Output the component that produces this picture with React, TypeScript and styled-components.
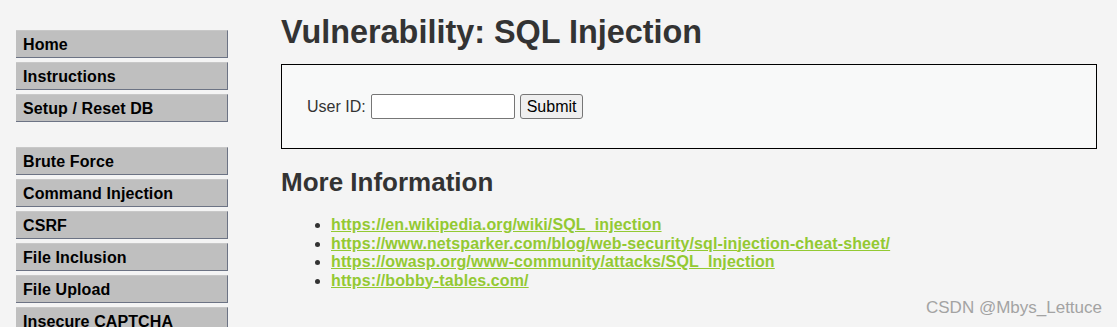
import React from "react";
import styled, { createGlobalStyle } from "styled-components";

const GlobalStyle = createGlobalStyle`
  html, body {
    margin: 0;
    padding: 0;
    background: #f4f4f4;
    font-family: "Liberation Sans", Arial, sans-serif;
  }
  * { box-sizing: border-box; }
`;

const Page = styled.div`
  position: relative;
  width: 1117px;
  height: 327px;
  overflow: hidden;
  display: flex;
  align-items: flex-start;
  background: #f4f4f4;
`;

const Sidebar = styled.nav`
  width: 228px;
  padding: 30px 0 0 16px;
  display: flex;
  flex-direction: column;
  gap: 25px;
  flex-shrink: 0;
`;

const MenuGroup = styled.ul`
  list-style: none;
  margin: 0;
  padding: 0;
  display: flex;
  flex-direction: column;
  gap: 4px;
`;

const MenuItem = styled.li`
  height: 28px;
  width: 212px;
  padding: 5px 7px 0;
  background: #bfbfbf;
  border-top: 1px solid #c8c8c8;
  border-right: 1px solid #6c7384;
  border-bottom: 1px solid #6c7384;
  font-size: 16px;
  font-weight: bold;
  letter-spacing: 0.1px;
  color: #000;
  line-height: 18px;
  white-space: nowrap;
`;

const Main = styled.main`
  width: 816px;
  margin-left: 53px;
  display: flex;
  flex-direction: column;
`;

const Title = styled.h1`
  margin: 14px 0 0;
  font-size: 32.4px;
  line-height: 36px;
  font-weight: bold;
  color: #333;
`;

const FormBox = styled.div`
  margin-top: 14px;
  height: 85px;
  border: 1px solid #000;
  background: #f8f9f9;
  padding: 0 25px;
  display: flex;
  align-items: center;
  gap: 5px;
  font-size: 16px;
  color: #333;
`;

const Label = styled.span`
  font-size: 16px;
  color: #333;
`;

const TextInput = styled.input`
  width: 144px;
  height: 25px;
  border: 1px solid #767676;
  border-radius: 2px;
  background: #fff;
  padding: 1px 2px;
  font-size: 13px;
`;

const SubmitButton = styled.button`
  height: 25px;
  padding: 0 6px;
  border: 1px solid #767676;
  border-radius: 3px;
  background: #efefef;
  font-family: "Liberation Sans", Arial, sans-serif;
  font-size: 16px;
  color: #000;
`;

const SubTitle = styled.h2`
  margin: 18px 0 0;
  font-size: 26px;
  line-height: 30px;
  font-weight: bold;
  color: #333;
`;

const LinkList = styled.ul`
  margin: 19px 0 0;
  padding-left: 50px;
  font-size: 16px;
  line-height: 18.5px;
  color: #333;
`;

const LinkItem = styled.li``;

const Link = styled.a`
  color: #93c932;
  font-weight: bold;
  letter-spacing: 0.12px;
  text-decoration: underline;
`;

const Watermark = styled.div`
  position: absolute;
  right: 15px;
  bottom: 9px;
  font-family: "Liberation Sans", Arial, sans-serif;
  font-size: 17px;
  color: #a3a3a3;
  white-space: nowrap;
`;

const groups = [
  ["Home", "Instructions", "Setup / Reset DB"],
  ["Brute Force", "Command Injection", "CSRF", "File Inclusion", "File Upload", "Insecure CAPTCHA"],
];

const links = [
  "https://en.wikipedia.org/wiki/SQL_injection",
  "https://www.netsparker.com/blog/web-security/sql-injection-cheat-sheet/",
  "https://owasp.org/www-community/attacks/SQL_Injection",
  "https://bobby-tables.com/",
];

export default function App() {
  return (
    <>
      <GlobalStyle />
      <Page>
        <Sidebar>
          {groups.map((g, i) => (
            <MenuGroup key={i}>
              {g.map((item) => (
                <MenuItem key={item}>{item}</MenuItem>
              ))}
            </MenuGroup>
          ))}
        </Sidebar>
        <Main>
          <Title>Vulnerability: SQL Injection</Title>
          <FormBox>
            <Label>User ID:</Label>
            <TextInput type="text" />
            <SubmitButton>Submit</SubmitButton>
          </FormBox>
          <SubTitle>More Information</SubTitle>
          <LinkList>
            {links.map((l) => (
              <LinkItem key={l}>
                <Link href="#">{l}</Link>
              </LinkItem>
            ))}
          </LinkList>
        </Main>
        <Watermark>CSDN @Mbys_Lettuce</Watermark>
      </Page>
    </>
  );
}
